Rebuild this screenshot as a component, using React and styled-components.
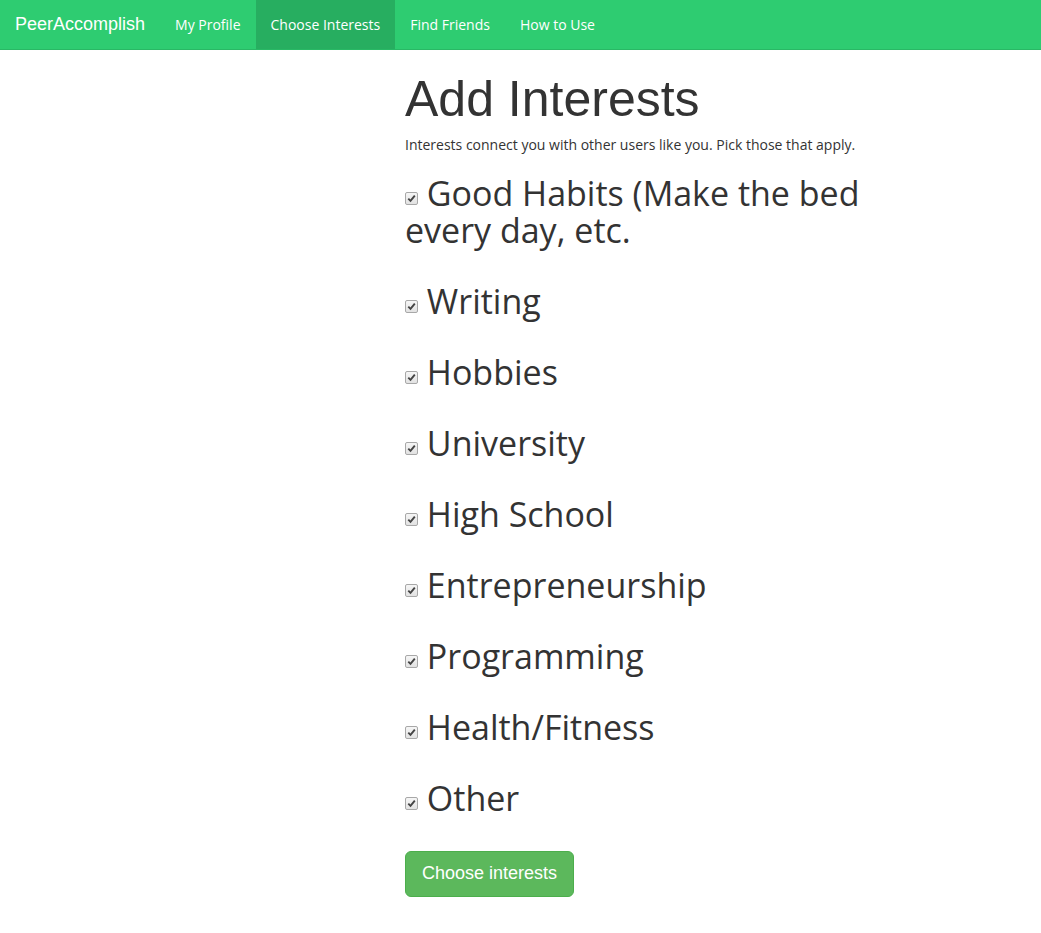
import React from "react";
import styled, { createGlobalStyle } from "styled-components";

const GlobalStyle = createGlobalStyle`
  html, body {
    margin: 0;
    padding: 0;
    background: #fff;
    color: #333;
    font-family: "Open Sans", "Noto Sans", sans-serif;
    font-size: 14px;
  }
`;

const NavBar = styled.nav`
  display: flex;
  align-items: stretch;
  height: 50px;
  background: #2ecc71;
  border-bottom: 1px solid #29b865;
  box-sizing: border-box;
`;

const Brand = styled.a`
  display: flex;
  align-items: center;
  padding: 0 15px;
  font-family: "Liberation Sans", Arial, sans-serif;
  font-size: 18px;
  color: #fff;
  text-decoration: none;
`;

const NavLink = styled.a`
  display: flex;
  align-items: center;
  padding: 0 15px;
  font-size: 14px;
  color: #fff;
  text-decoration: none;
  background: ${(p) => (p.$active ? "#27ae60" : "transparent")};
`;

const Main = styled.main`
  width: 470px;
  margin-left: 405px;
  padding-bottom: 40px;
`;

const Title = styled.h1`
  margin: 20px 0 0;
  font-family: "Liberation Sans", Arial, sans-serif;
  font-weight: 400;
  font-size: 50px;
  line-height: 58px;
`;

const Lead = styled.p`
  margin: 7px 0 20px;
  font-size: 14px;
  line-height: 20px;
`;

const Item = styled.label`
  display: block;
  margin: 0 0 34px;
  font-size: 34px;
  line-height: 37px;
`;

const Box = styled.span`
  display: inline-block;
  box-sizing: border-box;
  width: 13px;
  height: 13px;
  margin: 0 0 1px 0;
  border: 1px solid #a8a8a8;
  border-radius: 2px;
  background: linear-gradient(#f6f6f6, #e2e2e2);
  vertical-align: baseline;

  svg {
    display: block;
    margin: 1px 0 0 1px;
  }
`;

const Button = styled.button`
  display: inline-block;
  padding: 10px 16px;
  font-family: "Liberation Sans", Arial, sans-serif;
  font-size: 18px;
  line-height: 1.3333;
  color: #fff;
  background: #5cb85c;
  border: 1px solid #4cae4c;
  border-radius: 6px;
  cursor: pointer;
`;

const Check = () => (
  <Box>
    <svg width="9" height="9" viewBox="0 0 9 9">
      <path d="M1.3 4.6 L3.5 6.8 L7.8 1.6" fill="none" stroke="#444" strokeWidth="1.9" />
    </svg>
  </Box>
);

const interests = [
  "Good Habits (Make the bed every day, etc.",
  "Writing",
  "Hobbies",
  "University",
  "High School",
  "Entrepreneurship",
  "Programming",
  "Health/Fitness",
  "Other",
];

export default function App() {
  return (
    <>
      <GlobalStyle />
      <NavBar>
        <Brand href="#">PeerAccomplish</Brand>
        <NavLink href="#">My Profile</NavLink>
        <NavLink href="#" $active>Choose Interests</NavLink>
        <NavLink href="#">Find Friends</NavLink>
        <NavLink href="#">How to Use</NavLink>
      </NavBar>
      <Main>
        <Title>Add Interests</Title>
        <Lead>Interests connect you with other users like you. Pick those that apply.</Lead>
        {interests.map((name) => (
          <Item key={name}>
            <Check /> {name}
          </Item>
        ))}
        <Button>Choose interests</Button>
      </Main>
    </>
  );
}
